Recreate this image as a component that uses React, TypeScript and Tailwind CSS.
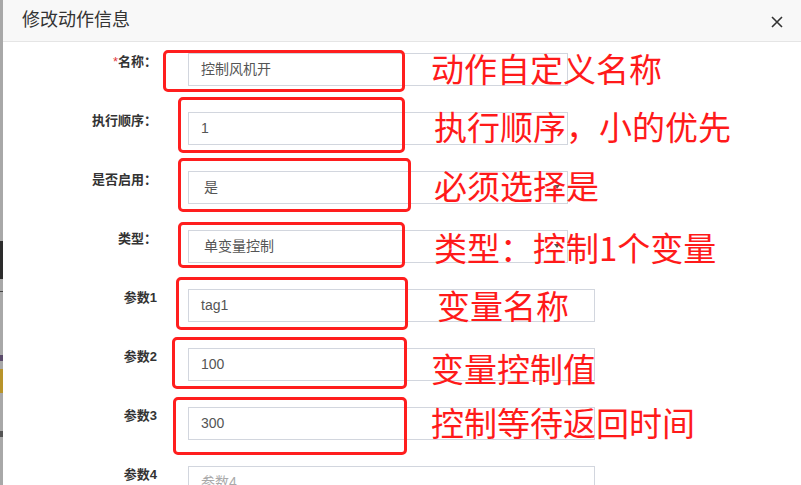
import React from 'react';

type Row = {
  label: string;
  value?: string;
  placeholder?: string;
  required?: boolean;
  short?: boolean;
  select?: boolean;
};

const rows: Row[] = [
  { label: '名称：', value: '控制风机开', required: true, short: true },
  { label: '执行顺序：', value: '1', short: true },
  { label: '是否启用：', value: '是', short: true, select: true },
  { label: '类型：', value: '单变量控制', short: true, select: true },
  { label: '参数1', value: 'tag1' },
  { label: '参数2', value: '100' },
  { label: '参数3', value: '300' },
  { label: '参数4', placeholder: '参数4' },
];

// red marks drawn over the screenshot
const boxes = [
  { left: 163, top: 50, width: 242, height: 42 },
  { left: 178, top: 97, width: 227, height: 56 },
  { left: 178, top: 158, width: 233, height: 54 },
  { left: 178, top: 222, width: 227, height: 46 },
  { left: 176, top: 277, width: 232, height: 53 },
  { left: 172, top: 337, width: 235, height: 52 },
  { left: 173, top: 397, width: 234, height: 58 },
];

const notes = [
  { left: 431, top: 47, text: '动作自定义名称' },
  { left: 434, top: 105, text: '执行顺序，小的优先' },
  { left: 434, top: 164, text: '必须选择是' },
  { left: 434, top: 226, text: '类型：控制1个变量' },
  { left: 437, top: 284, text: '变量名称' },
  { left: 431, top: 347, text: '变量控制值' },
  { left: 431, top: 401, text: '控制等待返回时间' },
];

const FormRow: React.FC<{ row: Row }> = ({ row }) => (
  <div className="flex items-start h-[33px] shrink-0">
    <div className="w-[154px] text-right text-[13px] font-bold leading-[18px] text-[#333]">
      {row.required && <span className="text-[#e4393c] font-normal">*</span>}
      {row.label}
    </div>
    <div
      className={
        'ml-[31px] h-[33px] border border-[#d2d6de] flex items-center relative ' +
        (row.short ? 'w-[380px] ' : 'w-[407px] ') +
        (row.select ? 'pl-[15px]' : 'pl-[12px]')
      }
    >
      {row.value ? (
        <span className="text-[14px] text-[#555]">{row.value}</span>
      ) : (
        <span className="text-[14px] text-[#aaa]">{row.placeholder}</span>
      )}
      {row.select && (
        <span className="absolute right-[7px] top-[13px] w-0 h-0 border-l-[3px] border-r-[3px] border-t-[4px] border-l-transparent border-r-transparent border-t-[#555]" />
      )}
    </div>
  </div>
);

export default function App() {
  return (
    <div
      className="relative w-[801px] h-[485px] overflow-hidden flex bg-white"
      style={{ fontFamily: '"Liberation Sans", "Noto Sans CJK SC", sans-serif' }}
    >
      <div className="w-[3px] flex flex-col bg-[#a8a8a8]">
        <div className="h-[241px]" />
        <div className="h-[38px] bg-[#2c2c2c]" />
        <div className="h-[12px]" />
        <div className="h-[1px] bg-[#444]" />
        <div className="h-[63px]" />
        <div className="h-[6px] bg-[#5a4a6a]" />
        <div className="h-[8px]" />
        <div className="h-[24px] bg-[#b8942a]" />
        <div className="h-[38px]" />
        <div className="h-[6px] bg-[#555]" />
        <div className="flex-1" />
      </div>
      <div className="flex-1 flex flex-col bg-white">
        <div className="h-[42px] shrink-0 bg-[#f8f8f8] border-b border-[#e5e5e5] flex items-center justify-between pl-[19px] pr-[18px]">
          <span className="text-[18px] text-[#333]">修改动作信息</span>
          <svg width="12" height="12" viewBox="0 0 12 12" className="mt-[2px]">
            <path d="M1 1 L11 11 M11 1 L1 11" stroke="#333" strokeWidth="1.6" />
          </svg>
        </div>
        <div className="flex flex-col gap-[26px] pt-[11px]">
          {rows.map((r) => (
            <FormRow key={r.label} row={r} />
          ))}
        </div>
      </div>

      {boxes.map((b, i) => (
        <div
          key={i}
          className="absolute border-[3px] border-[#ff1e1e] rounded-[5px]"
          style={{ left: b.left, top: b.top, width: b.width, height: b.height }}
        />
      ))}
      {notes.map((n, i) => (
        <div
          key={i}
          className="absolute text-[33px] leading-[42px] text-[#ff1a1a] whitespace-nowrap"
          style={{ left: n.left, top: n.top, fontFamily: '"Noto Sans CJK SC", sans-serif' }}
        >
          {n.text}
        </div>
      ))}
    </div>
  );
}
